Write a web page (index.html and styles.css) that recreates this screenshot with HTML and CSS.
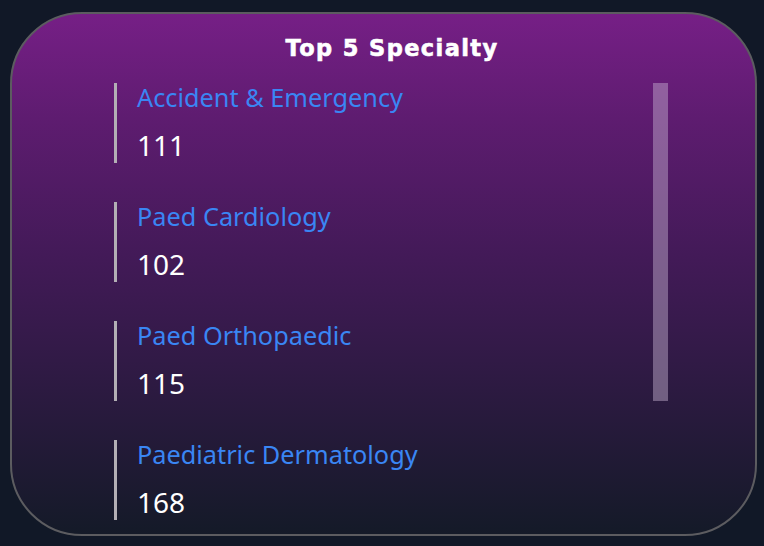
FILE: index.html
```html
<!DOCTYPE html>
<html>
<head>
<meta charset="utf-8">
<link rel="stylesheet" href="styles.css">
</head>
<body>
<div class="card">
  <h1 class="title">Top 5 Specialty</h1>
  <div class="body">
    <ul class="list">
      <li class="item"><div class="label">Accident &amp; Emergency</div><div class="value">111</div></li>
      <li class="item"><div class="label">Paed Cardiology</div><div class="value">102</div></li>
      <li class="item"><div class="label">Paed Orthopaedic</div><div class="value">115</div></li>
      <li class="item"><div class="label">Paediatric Dermatology</div><div class="value">168</div></li>
    </ul>
    <div class="scroll"><div class="thumb"></div></div>
  </div>
</div>
</body>
</html>
```
FILE: styles.css
```css
html, body {
  margin: 0;
  padding: 0;
  background: #111827;
  width: 764px;
  height: 546px;
  overflow: hidden;
}
.card {
  box-sizing: border-box;
  margin: 12px 0 0 10px;
  width: 747px;
  height: 524px;
  border: 2px solid #5c5c60;
  border-radius: 72px;
  background: linear-gradient(180deg, #761f86 0%, #5e1c70 20%, #441a59 45%, #2e1a43 70%, #141a28 100%);
  overflow: hidden;
  padding-top: 20px;
}
.title {
  margin: 0;
  text-align: center;
  color: #fff;
  font-family: "DejaVu Sans", sans-serif;
  font-weight: 700;
  font-size: 22.5px;
  line-height: 28px;
  letter-spacing: 1.4px;
  -webkit-text-stroke: 0.6px #fff;
  padding-left: 17px;
}
.body {
  display: flex;
  padding-left: 102px;
  margin-top: 21px;
}
.list {
  list-style: none;
  margin: 0;
  padding: 0;
  width: 539px;
  display: flex;
  flex-direction: column;
  gap: 39px;
}
.item {
  height: 80px;
  border-left: 3px solid #b3afb5;
  padding-left: 20px;
  box-sizing: border-box;
  font-family: "Noto Sans", "Open Sans", sans-serif;
}
.label {
  color: #3a86f4;
  font-size: 25.3px;
  line-height: 32px;
  margin-top: -2px;
  white-space: nowrap;
}
.value {
  color: #fff;
  font-size: 28px;
  line-height: 34px;
  margin-top: 15px;
}
.scroll {
  width: 15px;
  height: 318px;
}
.thumb {
  width: 100%;
  height: 100%;
  background: rgba(200, 180, 210, 0.45);
}
```
